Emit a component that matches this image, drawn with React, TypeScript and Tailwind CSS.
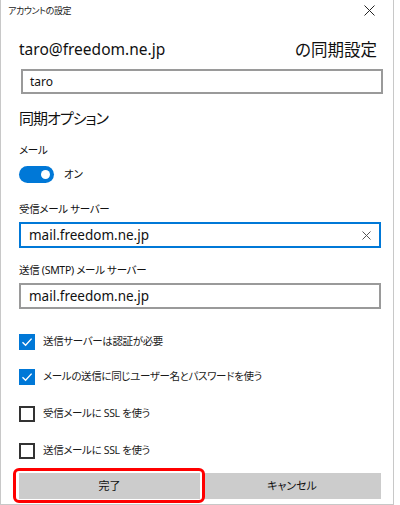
import React from 'react';

const font = { fontFamily: '"Noto Sans", "Noto Sans CJK JP", sans-serif' };

function Check({ checked, label }: { checked: boolean; label: string }) {
  return (
    <div className="flex items-center h-[20px]">
      {checked ? (
        <div className="w-[16px] h-[16px] bg-[#0078d7] flex items-center justify-center">
          <svg width="12" height="12" viewBox="0 0 12 12">
            <path d="M1.5 6.2 L4.6 9.2 L10.6 2.6" fill="none" stroke="#fff" strokeWidth="1.4" />
          </svg>
        </div>
      ) : (
        <div className="w-[16px] h-[16px] border-2 border-[#333]" />
      )}
      <span className="ml-[8px] text-[10.5px] tracking-[-0.35px] text-[#1a1a1a]">{label}</span>
    </div>
  );
}

export default function App() {
  return (
    <div style={font} className="w-[394px] h-[505px] bg-white border-l border-r border-b border-[#c8c8c8] text-[#111] overflow-hidden [font-feature-settings:'palt']">
      {/* Title bar */}
      <div className="h-[30px] flex items-start justify-between pl-[7px] pr-[18px] pt-[4px]">
        <span className="text-[9px] leading-[14px] tracking-[-0.4px] text-[#222]">アカウントの設定</span>
        <svg width="11" height="11" viewBox="0 0 11 11" className="mt-[1px]">
          <path d="M0.5 0.5 L10.5 10.5 M10.5 0.5 L0.5 10.5" stroke="#222" strokeWidth="1" />
        </svg>
      </div>

      <div className="pl-[18px] pr-[14px]">
        {/* Header */}
        <div className="mt-[8px] h-[24px] flex items-center justify-between pr-[2px]">
          <span className="text-[15.5px] text-[#111]">taro@freedom.ne.jp</span>
          <span className="text-[16.5px] text-[#111]">の同期設定</span>
        </div>

        <div className="mt-[7px] ml-[2px] w-[362px] h-[25px] border-2 border-[#9a9a9a] flex items-center pl-[7px] text-[12px]">
          taro
        </div>

        <div className="mt-[11px] h-[26px] flex items-center text-[15px] tracking-[-1px]">同期オプション</div>

        <div className="mt-[11px] h-[18px] flex items-center text-[10.5px] tracking-[-0.3px]">メール</div>

        <div className="mt-[6px] h-[17px] flex items-center">
          <div className="w-[35px] h-[17px] rounded-full bg-[#0078d7] flex items-center justify-end pr-[4px]">
            <div className="w-[9px] h-[9px] rounded-full bg-white" />
          </div>
          <span className="ml-[10px] text-[10.5px]">オン</span>
        </div>

        <div className="mt-[18px] h-[18px] flex items-center text-[10.5px] tracking-[-0.3px]">受信メール サーバー</div>
        <div className="mt-[3px] w-[362px] h-[26px] border-2 border-[#0078d7] flex items-center justify-between pl-[8px] pr-[8px] text-[13.5px]">
          <span>mail.freedom.ne.jp</span>
          <svg width="9" height="9" viewBox="0 0 9 9">
            <path d="M0.5 0.5 L8.5 8.5 M8.5 0.5 L0.5 8.5" stroke="#555" strokeWidth="1" />
          </svg>
        </div>

        <div className="mt-[14px] h-[18px] flex items-center text-[10.5px] tracking-[-0.3px]">送信 (SMTP) メール サーバー</div>
        <div className="mt-[3px] w-[362px] h-[26px] border-2 border-[#9a9a9a] flex items-center pl-[8px] text-[13.5px]">
          mail.freedom.ne.jp
        </div>

        <div className="mt-[23px]">
          <Check checked label="送信サーバーは認証が必要" />
        </div>
        <div className="mt-[15px]">
          <Check checked label="メールの送信に同じユーザー名とパスワードを使う" />
        </div>
        <div className="mt-[17px]">
          <Check checked={false} label="受信メールに SSL を使う" />
        </div>
        <div className="mt-[17px]">
          <Check checked={false} label="送信メールに SSL を使う" />
        </div>

        {/* Buttons */}
        <div className="mt-[12px] flex gap-[3px] w-[362px]">
          <div className="relative w-[181px]">
            <div className="h-[26px] bg-[#cccccc] flex items-center justify-center text-[11px]">完了</div>
            <div className="absolute -left-[6px] -top-[5px] w-[192px] h-[35px] border-[3px] border-[#ff0000] rounded-[6px]" />
          </div>
          <div className="flex-1 h-[26px] bg-[#cccccc] flex items-center justify-center text-[11px]">キャンセル</div>
        </div>
      </div>
    </div>
  );
}
